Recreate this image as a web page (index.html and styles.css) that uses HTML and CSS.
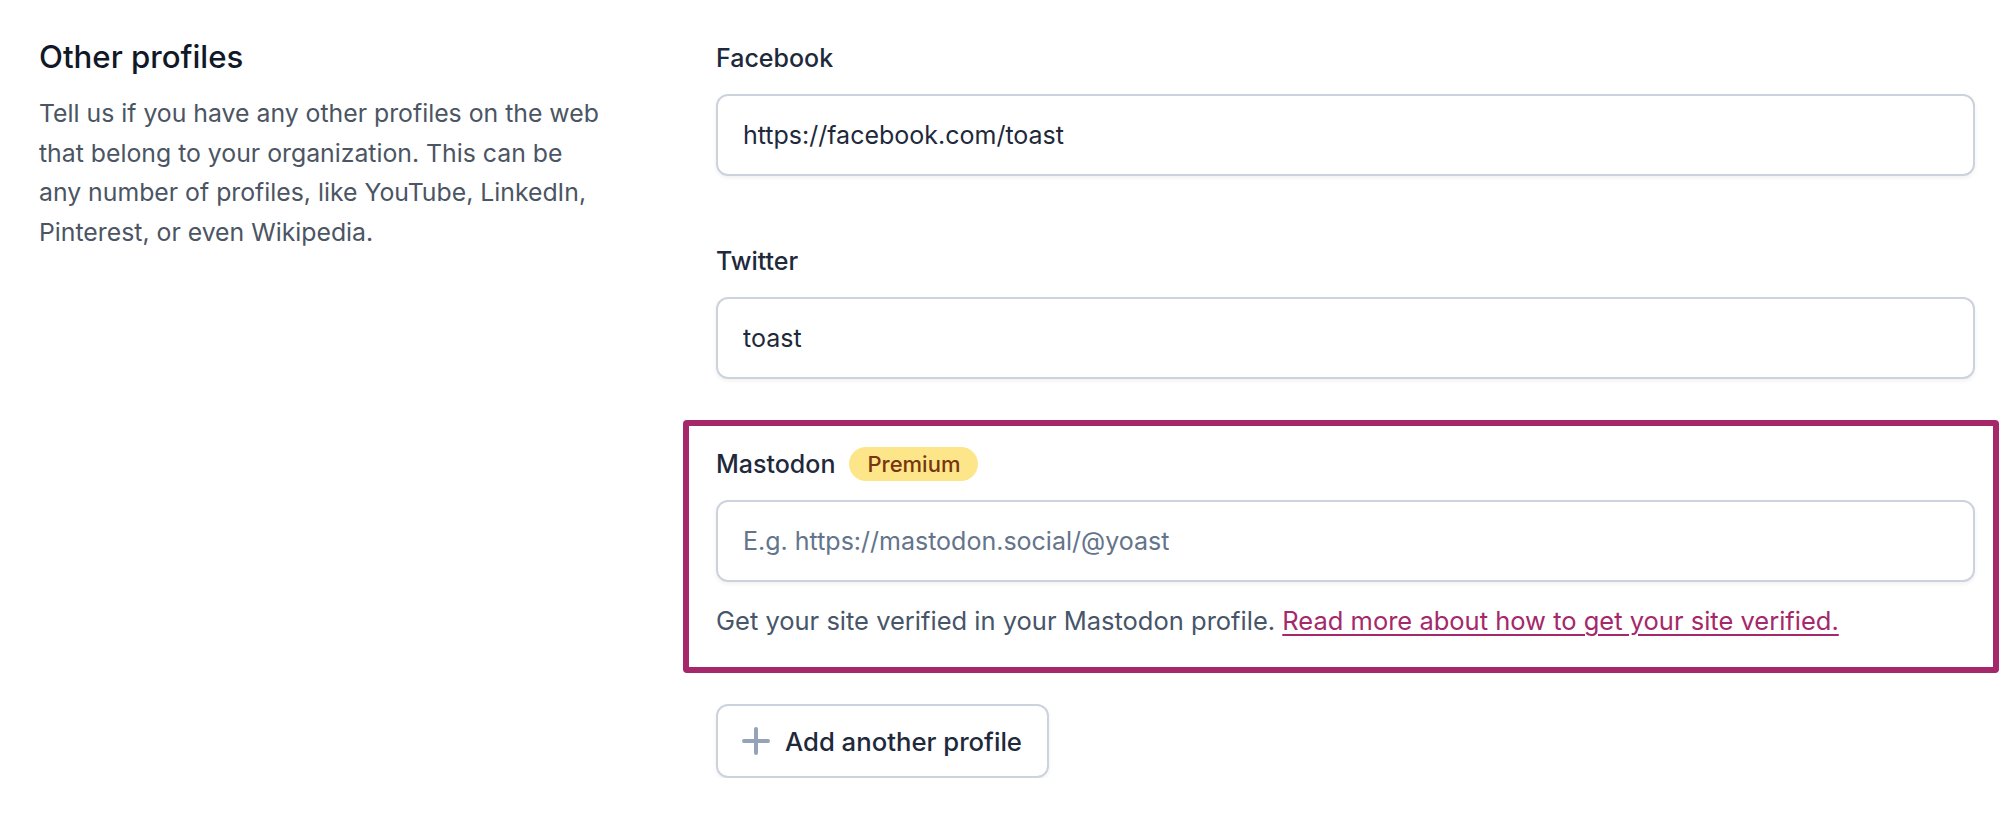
FILE: index.html
```html
<!DOCTYPE html>
<html lang="en">
<head>
<meta charset="utf-8">
<title>Other profiles</title>
<link rel="stylesheet" href="styles.css">
</head>
<body>
<main class="section">
  <div class="intro">
    <h2 class="intro-title">Other profiles</h2>
    <p class="intro-text">Tell us if you have any other profiles on the web that belong to your organization. This can be any number of profiles, like YouTube, LinkedIn, Pinterest, or even Wikipedia.</p>
  </div>
  <div class="fields">
    <div class="field">
      <label class="field-label" for="facebook">Facebook</label>
      <input class="field-input" id="facebook" type="text" value="https://facebook.com/toast">
    </div>
    <div class="field">
      <label class="field-label" for="twitter">Twitter</label>
      <input class="field-input" id="twitter" type="text" value="toast">
    </div>
    <div class="field field-highlight">
      <div class="field-label-row">
        <label class="field-label" for="mastodon">Mastodon</label>
        <span class="badge">Premium</span>
      </div>
      <input class="field-input" id="mastodon" type="text" placeholder="E.g. https://mastodon.social/@yoast">
      <p class="field-help">Get your site verified in your Mastodon profile. <a class="field-link" href="#">Read more about how to get your site verified.</a></p>
    </div>
    <button class="add-button" type="button">
      <svg class="add-icon" viewBox="0 0 28 28" aria-hidden="true"><path d="M14 2v24M2 14h24" /></svg>
      <span>Add another profile</span>
    </button>
  </div>
</main>
</body>
</html>
```

FILE: styles.css
```css
* { box-sizing: border-box; }

html, body {
  margin: 0;
  padding: 0;
  background: #ffffff;
}

body {
  font-family: Inter, "Noto Sans", "Liberation Sans", sans-serif;
  color: #1e293b;
}

.section {
  display: grid;
  grid-template-columns: 677px 1fr;
  padding: 37px 41px 0 39px;
}

.intro-title {
  margin: 0;
  font-size: 31.2px;
  line-height: 40px;
  font-weight: 500;
  color: #111827;
}

.intro-text {
  margin: 17px 0 0;
  width: 568px;
  font-size: 24.8px;
  line-height: 39.5px;
  color: #4b5563;
}

.fields {
  display: flex;
  flex-direction: column;
  align-items: flex-start;
  padding-top: 3px;
}

.field {
  width: 100%;
  display: flex;
  flex-direction: column;
  margin-bottom: 67px;
}

.field-label-row {
  display: flex;
  align-items: center;
  gap: 14px;
  height: 36px;
  margin-bottom: 18px;
}

.field-label {
  display: block;
  font-size: 25px;
  line-height: 36px;
  font-weight: 500;
  color: #1e293b;
  margin-bottom: 18px;
}

.field-label-row .field-label { margin-bottom: 0; }

.field-input {
  width: 100%;
  height: 82px;
  padding: 0 25px;
  border: 2px solid #cdd3dc;
  border-radius: 12px;
  box-shadow: 0 2px 4px rgba(15, 23, 42, 0.06);
  font-family: inherit;
  font-size: 25px;
  color: #1e293b;
  background: #fff;
  outline: none;
}

.field-input::placeholder { color: #64748b; }

.badge {
  display: inline-flex;
  align-items: center;
  height: 34px;
  padding: 0 18px;
  border-radius: 17px;
  background: #fde68a;
  color: #78350f;
  font-size: 22px;
  font-weight: 500;
}

.field-help {
  margin: 21px 0 0;
  font-size: 25.5px;
  line-height: 36px;
  color: #475569;
}

.field-link {
  color: #a4286a;
  text-decoration: underline;
  text-underline-offset: 4px;
}

.field-highlight {
  position: relative;
  margin-bottom: 65px;
}

.field-highlight::after {
  content: "";
  position: absolute;
  top: -26px;
  left: -33px;
  right: -24px;
  bottom: -34px;
  border: 6px solid #a4286a;
  border-radius: 4px;
  pointer-events: none;
}

.add-button {
  display: inline-flex;
  align-items: center;
  gap: 15px;
  height: 74px;
  padding: 0 25px 0 24px;
  border: 2px solid #cdd3dc;
  border-radius: 12px;
  background: #fff;
  box-shadow: 0 2px 4px rgba(15, 23, 42, 0.06);
  font-family: inherit;
  font-size: 25.7px;
  font-weight: 500;
  color: #1e293b;
  cursor: pointer;
}

.add-icon {
  width: 28px;
  height: 28px;
  fill: none;
  stroke: #94a3b8;
  stroke-width: 4;
  stroke-linecap: round;
}
```
